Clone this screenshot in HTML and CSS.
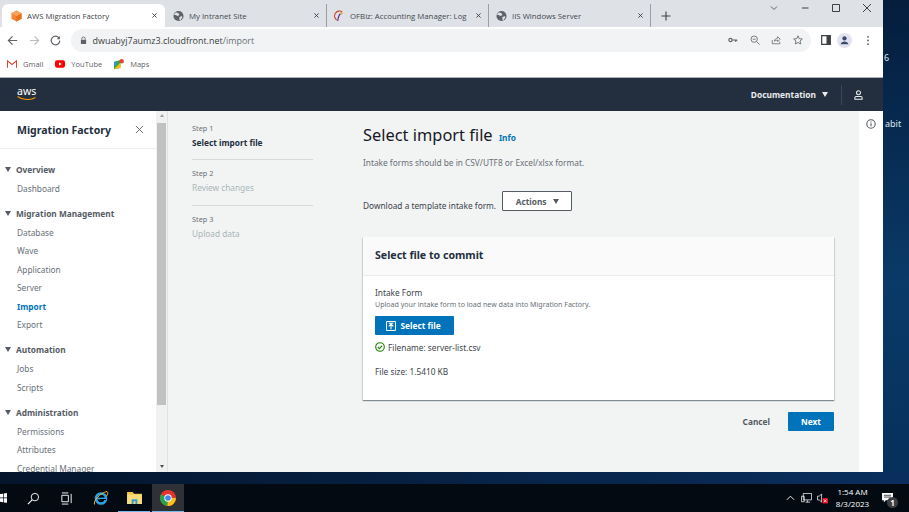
FILE: index.html
```html
<!DOCTYPE html>
<html lang="en">
<head>
  <meta charset="UTF-8">
  <title>AWS Migration Factory</title>
  <link rel="stylesheet" href="styles.css">
</head>
<body>
  <div class="desktop">
    <div class="browser">
      <!-- tab strip -->
      <div class="tabstrip">
        <div class="tab tab-active">
          <svg class="favicon" viewBox="0 0 12 12"><path d="M6 0l5.500 3v6L6 12 .5 9V3z" fill="#f58536"/><path d="M6 6l5.500-3v6L6 12z" fill="#e8701a"/><path d="M6 0l5.500 3L6 6 .5 3z" fill="#f9a45c"/></svg>
          <span class="tab-title">AWS Migration Factory</span>
          <svg class="tab-close" viewBox="0 0 6 6"><path d="M.5 .5l5 5M5.500 .5l-5 5" stroke="#3c4043" stroke-width="1.100"/></svg>
        </div>
        <div class="tab tab-2">
          <svg class="favicon" viewBox="0 0 12 12"><circle cx="6" cy="6" r="5.500" fill="#5f6368"/><path d="M3 2l3 1 1 2-2 1-2-1-2 0zM7 7l3-1 0 2-2 3-1-1z" fill="#dee1e6"/></svg>
          <span class="tab-title">My Intranet Site</span>
          <svg class="tab-close" viewBox="0 0 6 6"><path d="M.5 .5l5 5M5.500 .5l-5 5" stroke="#3c4043" stroke-width="1.100"/></svg>
        </div>
        <div class="tab tab-3">
          <svg class="favicon" viewBox="0 0 12 12"><path d="M9 1.500A5 5 0 0 0 3 10.500" fill="none" stroke="#c8452c" stroke-width="1.200"/><path d="M7 3.500C5 5 4.500 8 4 11.500" fill="none" stroke="#5b2a86" stroke-width="1.200"/><circle cx="8" cy="3" r="1.300" fill="#e8a33a"/></svg>
          <span class="tab-title">OFBiz: Accounting Manager: Log</span>
          <svg class="tab-close" viewBox="0 0 6 6"><path d="M.5 .5l5 5M5.500 .5l-5 5" stroke="#3c4043" stroke-width="1.100"/></svg>
        </div>
        <div class="tab tab-4">
          <svg class="favicon" viewBox="0 0 12 12"><circle cx="6" cy="6" r="5.500" fill="#5f6368"/><path d="M3 2l3 1 1 2-2 1-2-1-2 0zM7 7l3-1 0 2-2 3-1-1z" fill="#dee1e6"/></svg>
          <span class="tab-title">IIS Windows Server</span>
          <svg class="tab-close" viewBox="0 0 6 6"><path d="M.5 .5l5 5M5.500 .5l-5 5" stroke="#3c4043" stroke-width="1.100"/></svg>
        </div>
        <svg class="new-tab" viewBox="0 0 10 10"><path d="M5 .5v9M.5 5h9" stroke="#3c4043" stroke-width="1.100"/></svg>
        <div class="win-controls">
          <svg viewBox="0 0 10 10"><path d="M2 3.500l3 3 3-3" fill="none" stroke="#5f6368"/></svg>
          <svg viewBox="0 0 10 10"><path d="M2 5h6.500" stroke="#3c4043"/></svg>
          <svg viewBox="0 0 10 10"><path d="M1.500 1.500h7v7h-7z" fill="none" stroke="#3c4043"/></svg>
          <svg viewBox="0 0 10 10"><path d="M1 1l8 8M9 1l-8 8" stroke="#3c4043"/></svg>
        </div>
      </div>

      <!-- address bar -->
      <div class="toolbar">
        <svg class="nav-icon" viewBox="0 0 12 12"><path d="M11 6H2M6 1.500L1.500 6 6 10.500" fill="none" stroke="#5f6368" stroke-width="1.300"/></svg>
        <svg class="nav-icon nav-off" viewBox="0 0 12 12"><path d="M1 6h9M6 1.500L10.500 6 6 10.500" fill="none" stroke="#b9bcc0" stroke-width="1.300"/></svg>
        <svg class="nav-icon" viewBox="0 0 12 12"><path d="M10 3.500A4.700 4.700 0 1 0 10.700 6" fill="none" stroke="#5f6368" stroke-width="1.300"/><path d="M10.800 1v3.500H7.300z" fill="#5f6368"/></svg>
        <div class="omnibox">
          <svg class="lock" viewBox="0 0 8 10"><path d="M2 4V3a2 2 0 0 1 4 0v1" fill="none" stroke="#5f6368"/><rect x="1" y="4" width="6" height="5" rx=".5" fill="#5f6368"/></svg>
          <span class="url">dwuabyj7aumz3.cloudfront.net<span class="url-path">/import</span></span>
          <div class="omni-icons">
            <svg viewBox="0 0 12 12"><circle cx="3" cy="6" r="2" fill="none" stroke="#5f6368" stroke-width="1.400"/><path d="M5 6h6M9 6v2M10.500 6v1.500" stroke="#5f6368" stroke-width="1.300"/></svg>
            <svg viewBox="0 0 12 12"><circle cx="5" cy="5" r="3.800" fill="none" stroke="#5f6368"/><path d="M8 8l3.500 3.500M3.300 5h3.400" stroke="#5f6368"/></svg>
            <svg viewBox="0 0 12 12"><path d="M1.500 6v4.500h9V8M4 7.500C4.500 5 6 3.800 8 3.800V2l3 3-3 3V6C6.500 6 5 6.500 4 7.500z" fill="none" stroke="#5f6368" stroke-width=".9"/></svg>
            <svg viewBox="0 0 12 12"><path d="M6 1l1.500 3.400 3.700.4-2.800 2.400.8 3.600L6 9l-3.200 1.800.8-3.600L.8 4.800l3.700-.4z" fill="none" stroke="#5f6368"/></svg>
          </div>
        </div>
        <svg class="panel-icon" viewBox="0 0 10 10"><path d="M.7.700h8.600v8.600H.7z" fill="none" stroke="#3c4043" stroke-width="1.200"/><path d="M5.500 1h4v8h-4z" fill="#3c4043"/></svg>
        <div class="profile"><svg viewBox="0 0 14 14"><circle cx="7" cy="4.800" r="2.300" fill="#3c4a6b"/><path d="M2.800 11c.4-2 2.200-3 4.200-3s3.800 1 4.200 3z" fill="#3c4a6b"/></svg></div>
        <svg class="dots" viewBox="0 0 4 12"><circle cx="2" cy="2" r="1" fill="#5f6368"/><circle cx="2" cy="6" r="1" fill="#5f6368"/><circle cx="2" cy="10" r="1" fill="#5f6368"/></svg>
      </div>

      <!-- bookmarks -->
      <div class="bookmarks">
        <div class="bookmark bm-gmail">
          <svg viewBox="0 0 11 9"><path d="M.5 8.500V1L5.500 5 10.500 1v7.500" fill="none" stroke="#d9443a" stroke-width="1.200"/></svg>
          <span>Gmail</span>
        </div>
        <div class="bookmark bm-youtube">
          <svg viewBox="0 0 11 8"><rect width="11" height="8" rx="2" fill="#f00"/><path d="M4.300 2.200L7.500 4 4.300 5.800z" fill="#fff"/></svg>
          <span>YouTube</span>
        </div>
        <div class="bookmark">
          <svg viewBox="0 0 11 11"><path d="M0 3l7-2v9l-7 1z" fill="#34a853"/><path d="M0 11l7-7v6z" fill="#fbbc04"/><path d="M3 5L0 8V3z" fill="#4285f4"/><circle cx="8.500" cy="2.500" r="2.400" fill="#ea4335"/></svg>
          <span>Maps</span>
        </div>
      </div>

      <!-- app header -->
      <header class="app-header">
        <div class="aws-logo">
          <span class="aws-word">aws</span>
          <svg viewBox="0 0 20 5"><path d="M.5 .5C5 4 14 4.500 18.500 1.500" fill="none" stroke="#f90" stroke-width="1.100"/></svg>
        </div>
        <div class="doc-menu">Documentation <span class="caret caret-light"></span></div>
        <div class="user-menu">
          <svg viewBox="0 0 10 11"><circle cx="5" cy="3" r="2.200" fill="none" stroke="#e9ebed" stroke-width="1.200"/><path d="M1 10.200V8.500c0-.8.600-1.300 1.300-1.300h5.400c.7 0 1.300.5 1.300 1.300v1.700z" fill="none" stroke="#e9ebed" stroke-width="1.200"/></svg>
        </div>
      </header>

      <div class="app-body">
        <!-- side navigation -->
        <nav class="sidenav">
          <div class="sidenav-head">
            <span class="sidenav-title">Migration Factory</span>
            <svg class="sidenav-close" viewBox="0 0 10 10"><path d="M1 1l8 8M9 1l-8 8" stroke="#545b64" stroke-width="1"/></svg>
          </div>
          <div class="nav-groups">
            <div class="nav-group">
              <div class="nav-heading"><span class="caret"></span>Overview</div>
              <a class="nav-link">Dashboard</a>
            </div>
            <div class="nav-group">
              <div class="nav-heading"><span class="caret"></span>Migration Management</div>
              <a class="nav-link">Database</a>
              <a class="nav-link">Wave</a>
              <a class="nav-link">Application</a>
              <a class="nav-link">Server</a>
              <a class="nav-link nav-current">Import</a>
              <a class="nav-link">Export</a>
            </div>
            <div class="nav-group">
              <div class="nav-heading"><span class="caret"></span>Automation</div>
              <a class="nav-link">Jobs</a>
              <a class="nav-link">Scripts</a>
            </div>
            <div class="nav-group">
              <div class="nav-heading"><span class="caret"></span>Administration</div>
              <a class="nav-link">Permissions</a>
              <a class="nav-link">Attributes</a>
              <a class="nav-link nav-last">Credential Manager</a>
            </div>
          </div>
        </nav>
        <div class="scrollbar">
          <span class="scroll-up"></span>
          <span class="scroll-thumb"></span>
          <span class="scroll-down"></span>
        </div>

        <!-- wizard -->
        <main class="wizard">
          <ol class="steps">
            <li class="step">
              <small>Step 1</small>
              <span class="step-current">Select import file</span>
            </li>
            <li class="step">
              <small>Step 2</small>
              <span class="step-off">Review changes</span>
            </li>
            <li class="step">
              <small>Step 3</small>
              <span class="step-off">Upload data</span>
            </li>
          </ol>

          <section class="content">
            <h1>Select import file <a class="info">Info</a></h1>
            <p class="intro">Intake forms should be in CSV/UTF8 or Excel/xlsx format.</p>
            <div class="template-row">
              <span class="template-text">Download a template intake form.</span>
              <button class="btn-normal">Actions <span class="caret"></span></button>
            </div>

            <div class="card">
              <div class="card-head">Select file to commit</div>
              <div class="card-body">
                <div class="field-label">Intake Form</div>
                <div class="field-desc">Upload your intake form to load new data into Migration Factory.</div>
                <button class="btn-primary btn-file">
                  <svg viewBox="0 0 11 11"><path d="M.6.600h9.800v9.800H.6z" fill="none" stroke="#fff" stroke-width="1.100"/><path d="M5.500 9V4M3 5.800l2.500-2.500L8 5.800M3 2.500h5" fill="none" stroke="#fff" stroke-width="1.200"/></svg>
                  Select file
                </button>
                <div class="file-name">
                  <svg viewBox="0 0 10 10"><circle cx="5" cy="5" r="4.300" fill="none" stroke="#1d8102" stroke-width="1.100"/><path d="M2.800 5l1.600 1.600 2.800-3" fill="none" stroke="#1d8102" stroke-width="1.100"/></svg>
                  Filename: server-list.csv
                </div>
                <div class="file-size">File size: 1.5410 KB</div>
              </div>
            </div>

            <div class="actions">
              <a class="btn-link">Cancel</a>
              <button class="btn-primary btn-next">Next</button>
            </div>
          </section>
        </main>

        <aside class="tools">
          <svg viewBox="0 0 10 10"><circle cx="5" cy="5" r="4.200" fill="none" stroke="#545b64" stroke-width="1.100"/><path d="M5 4.300v3M5 2.400v1" stroke="#545b64" stroke-width="1.100"/></svg>
        </aside>
      </div>
    </div>

    <div class="wallpaper">
      <span class="wp-6">6</span>
      <span class="wp-abit">abit</span>
    </div>
  </div>

  <!-- windows taskbar -->
  <footer class="taskbar">
    <svg class="tb-start" viewBox="0 0 8 12"><path d="M0 1.500l3.500-.5v4.500H0zM4.300 .9L8 .4v5.100H4.300zM0 6.400h3.500v4.500L0 10.400zM4.300 6.400H8v5.100l-3.700-.5z" fill="#fff"/></svg>
    <svg class="tb-icon tb-search" viewBox="0 0 14 14"><circle cx="8.500" cy="5.500" r="4" fill="none" stroke="#fff"/><path d="M5.500 8.500L1 13" stroke="#fff" stroke-width="1.200"/></svg>
    <svg class="tb-icon tb-tasks" viewBox="0 0 14 14"><path d="M2 3.500h7v7H2zM12 2v10" fill="none" stroke="#fff"/><path d="M2 1h7M2 13h7" stroke="#fff"/></svg>
    <svg class="tb-icon tb-ie" viewBox="0 0 16 16"><circle cx="8" cy="8.500" r="5" fill="none" stroke="#2ba4e8" stroke-width="2.600"/><path d="M3.500 8.500h9" stroke="#2ba4e8" stroke-width="1.700"/><path d="M13 9.500h-6" stroke="#000" stroke-width="1"/><path d="M1.500 14.500C0 11 7 3 14 1.500c1.500 1 .5 3-.5 4.500" fill="none" stroke="#f4b828" stroke-width="1"/></svg>
    <div class="tb-app tb-explorer"><svg viewBox="0 0 16 14"><path d="M0 1h6l1.500 2H16v11H0z" fill="#f3c74f"/><path d="M0 4h16v10H0z" fill="#f9da7d"/><path d="M5 9h6v5H5z" fill="#2a9bd6"/><path d="M7 11h2v3H7z" fill="#f9da7d"/></svg></div>
    <div class="tb-app tb-chrome"><svg viewBox="0 0 16 16"><circle cx="8" cy="8" r="8" fill="#e3352d"/><path d="M8 8L1 4.200A8 8 0 0 0 7.400 16z" fill="#2aa24a"/><path d="M8 8h8A8 8 0 0 1 7.400 16z" fill="#fbc116"/><circle cx="8" cy="8" r="3.700" fill="#fff"/><circle cx="8" cy="8" r="2.800" fill="#4285f4"/></svg></div>
    <div class="tray">
      <svg class="tray-up" viewBox="0 0 10 6"><path d="M1 5l4-4 4 4" fill="none" stroke="#fff"/></svg>
      <svg class="tray-net" viewBox="0 0 12 12"><path d="M2.500 .5h9v7h-9zM.5 3.500h3v6h-3zM5 10h5M7 8v2" fill="#030a12" stroke="#fff" stroke-width=".8"/></svg>
      <svg class="tray-vol" viewBox="0 0 12 12"><path d="M.5 3.500h2L5 1v9L2.500 7.500h-2z" fill="none" stroke="#fff" stroke-width=".8"/><rect x="6" y="5.500" width="6" height="6" rx="1" fill="#e81123"/><path d="M7.500 7l3 3M10.500 7l-3 3" stroke="#fff" stroke-width=".8"/></svg>
      <div class="clock"><span>1:54 AM</span><span>8/3/2023</span></div>
      <div class="notify">
        <svg viewBox="0 0 12 11"><path d="M0 0h12v8H4L2 10.500V8H0z" fill="#fff"/><path d="M2 2.500h8M2 4.500h8" stroke="#030a12" stroke-width=".8"/></svg>
        <span class="notify-badge">1</span>
      </div>
    </div>
  </footer>
</body>
</html>
```

FILE: styles.css
```css
:root {
  --squid: #232f3e;
  --text: #16191f;
  --grey: #545b64;
  --light-grey: #aab7b8;
  --blue: #0073bb;
  --page-bg: #f2f3f3;
  --line: #d5dbdb;
}

* {
  box-sizing: border-box;
}

html, body {
  margin: 0;
  height: 512px;
  overflow: hidden;
}

body {
  display: flex;
  flex-direction: column;
  font-family: "Noto Sans", "Open Sans", Arial, sans-serif;
  font-size: 8.300px;
  color: var(--text);
  background: linear-gradient(90deg, #04152c, #0a2f5e);
}

svg {
  display: block;
  flex: none;
}

button {
  font-family: inherit;
  cursor: pointer;
}

.caret {
  display: inline-block;
  width: 0;
  height: 0;
  border-left: 3.500px solid transparent;
  border-right: 3.500px solid transparent;
  border-top: 5px solid var(--grey);
}

.caret-light {
  border-top-color: #e9ebed;
}

/* desktop and window */
.desktop {
  display: flex;
  height: 472px;
  flex: none;
}

.browser {
  width: 883px;
  display: flex;
  flex-direction: column;
  background: #fff;
}

.wallpaper {
  position: relative;
  flex: 1;
  color: #dfe7ef;
  font-size: 9px;
  background: linear-gradient(180deg, #041d3d, #0a3a68 60%, #06305c);
}

.wp-6 {
  position: absolute;
  left: 1px;
  top: 51px;
}

.wp-abit {
  position: absolute;
  left: 2px;
  top: 117px;
}

/* tabs */
.tabstrip {
  height: 27px;
  flex: none;
  display: flex;
  align-items: flex-end;
  padding-left: 2px;
  background: #dee1e6;
  font-family: "Open Sans", Arial, sans-serif;
  font-size: 7.800px;
  color: #45494e;
}

.tab {
  height: 23px;
  display: flex;
  align-items: center;
  gap: 5px;
  border-right: 1px solid #9aa0a6;
  background-clip: padding-box;
}

.tab-active {
  width: 163px;
  padding-left: 9px;
  padding-right: 8px;
  border-right: 0;
  border-radius: 6px 6px 0 0;
  background: #fff;
  color: #3c4043;
}

.tab-2 {
  width: 162px;
  padding-left: 8px;
  padding-right: 7px;
}

.tab-3 {
  width: 162px;
  padding-left: 7px;
  padding-right: 7px;
}

.tab-4 {
  width: 162px;
  padding-left: 7px;
  padding-right: 7px;
}

.favicon {
  width: 11px;
  height: 12px;
}

.tab-title {
  flex: 1;
  white-space: nowrap;
}

.tab-close {
  width: 5px;
  height: 5px;
}

.new-tab {
  width: 10px;
  height: 10px;
  margin-left: 10px;
  margin-bottom: 6px;
}

.win-controls {
  position: absolute;
  top: 3px;
  left: 769px;
  display: flex;
  gap: 21px;
}

.win-controls svg {
  width: 10px;
  height: 10px;
}

/* address bar */
.toolbar {
  height: 26px;
  flex: none;
  display: flex;
  align-items: center;
  padding-left: 7px;
  background: #fff;
}

.nav-icon {
  width: 11px;
  height: 11px;
  margin-right: 10.500px;
}

.omnibox {
  width: 740px;
  height: 23px;
  margin-left: -1px;
  display: flex;
  align-items: center;
  padding-left: 9px;
  border-radius: 12px;
  background: #f1f3f4;
  font-family: "Open Sans", Arial, sans-serif;
  font-size: 8.950px;
}

.lock {
  width: 7px;
  height: 9px;
  margin-right: 6px;
}

.url {
  color: #3c4043;
}

.url-path {
  color: #6b7075;
}

.omni-icons {
  margin-left: auto;
  display: flex;
  gap: 11.500px;
  padding-right: 8px;
}

.omni-icons svg {
  width: 10px;
  height: 10px;
}

.panel-icon {
  width: 10px;
  height: 10px;
  margin-left: 10px;
}

.profile {
  width: 15px;
  height: 15px;
  margin-left: 6px;
  display: flex;
  align-items: center;
  justify-content: center;
  border-radius: 50%;
  background: #e3e3f0;
}

.profile svg {
  width: 13px;
  height: 13px;
}

.dots {
  width: 4px;
  height: 11px;
  margin-left: 14px;
}

/* bookmarks */
.bookmarks {
  height: 24px;
  flex: none;
  display: flex;
  align-items: center;
  gap: 12px;
  padding: 0 0 3px 7px;
  font-family: "Open Sans", Arial, sans-serif;
  font-size: 7.500px;
  color: #5f6368;
}

.bookmark {
  display: flex;
  align-items: center;
  gap: 6px;
}

.bookmark svg {
  width: 10px;
  height: 10px;
}

/* app header */
.app-header {
  height: 34px;
  flex: none;
  display: flex;
  align-items: center;
  padding-left: 17px;
  background: var(--squid);
  border-top: 1px solid #aab0b6;
  color: #e9ebed;
}

.aws-logo {
  width: 21px;
  margin-top: -1px;
}

.aws-word {
  display: block;
  height: 9px;
  line-height: 8px;
  font-size: 10.500px;
  color: #fff;
}

.aws-logo svg {
  width: 20px;
  height: 5px;
}

.doc-menu {
  margin-left: auto;
  margin-top: -1px;
  display: flex;
  align-items: center;
  gap: 6px;
  font-weight: 700;
  font-size: 8.400px;
}

.user-menu {
  margin-left: 13px;
  height: 20px;
  padding: 0 20px 0 12px;
  display: flex;
  align-items: center;
  border-left: 1px solid #3a4757;
}

.user-menu svg {
  width: 9px;
  height: 10px;
}

/* layout under the header */
.app-body {
  flex: 1;
  min-height: 0;
  display: flex;
  background: var(--page-bg);
}

/* side navigation */
.sidenav {
  width: 156px;
  flex: none;
  overflow: hidden;
  background: #fff;
}

.sidenav-head {
  height: 38px;
  display: flex;
  align-items: center;
  justify-content: space-between;
  padding: 0 12px 0 17px;
  border-bottom: 1px solid #eaeded;
}

.sidenav-title {
  font-size: 10.550px;
  font-weight: 700;
  color: #232f3e;
}

.sidenav-close {
  width: 9px;
  height: 9px;
}

.nav-groups {
  padding-top: 10px;
  display: flex;
  flex-direction: column;
  gap: 5px;
}

.nav-heading {
  height: 20.500px;
  display: flex;
  align-items: center;
  gap: 5px;
  padding-left: 5px;
  font-weight: 700;
  color: var(--grey);
}

.nav-link {
  display: block;
  height: 18.500px;
  line-height: 18.500px;
  padding-left: 17px;
  color: #687078;
  white-space: nowrap;
}

.nav-current {
  color: var(--blue);
  font-weight: 700;
}

.scrollbar {
  width: 12px;
  flex: none;
  display: flex;
  flex-direction: column;
  align-items: center;
  border-right: 1px solid #dfe2e2;
  background: #f1f1f1;
}

.scroll-up {
  margin-top: 3px;
  border-left: 2.500px solid transparent;
  border-right: 2.500px solid transparent;
  border-bottom: 3px solid #a3a3a3;
}

.scroll-thumb {
  width: 9px;
  height: 282px;
  margin-top: 6px;
  margin-right: 1px;
  background: #c1c1c1;
}

.scroll-down {
  margin-top: auto;
  margin-bottom: 4px;
  border-left: 2.500px solid transparent;
  border-right: 2.500px solid transparent;
  border-top: 3px solid #505050;
}

/* wizard */
.wizard {
  flex: 1;
  min-width: 0;
  display: flex;
  padding: 10px 25px 0 24px;
  gap: 50px;
}

.steps {
  width: 121px;
  flex: none;
  margin: 0;
  padding: 0;
  list-style: none;
}

.step {
  height: 46px;
  padding-top: 1px;
  border-bottom: 1px solid var(--line);
  line-height: 13px;
}

.step:first-child {
  height: 39px;
}

.step + .step {
  padding-top: 7px;
}

.step:last-child {
  border-bottom: 0;
}

.step small {
  display: block;
  margin-bottom: 1px;
  font-size: 7.300px;
  color: #687078;
}

.step-current {
  font-weight: 700;
  color: var(--squid);
}

.step-off {
  color: var(--light-grey);
}

.content {
  width: 471px;
  flex: none;
  padding-top: 1px;
}

h1 {
  margin: 0;
  height: 27px;
  font-size: 16.400px;
  line-height: 25px;
  font-weight: 400;
  color: #16191f;
}

.info {
  margin-left: 2px;
  font-size: 8.300px;
  font-weight: 700;
  color: var(--blue);
}

.intro {
  margin: 7px 0 0;
  line-height: 13px;
  color: #687078;
}

.template-row {
  margin-top: 22px;
  display: flex;
  align-items: center;
  gap: 6px;
  height: 20px;
}

.template-text {
  margin-top: 9px;
  color: #3b444c;
}

.btn-normal {
  width: 70px;
  height: 20px;
  padding: 0;
  display: flex;
  align-items: center;
  justify-content: center;
  gap: 6px;
  border: 1px solid var(--grey);
  border-radius: 1px;
  background: #fff;
  font-size: 8.300px;
  font-weight: 700;
  color: var(--grey);
}

.card {
  margin-top: 26px;
  background: #fff;
  box-shadow: 0 1px 1px 0 rgba(0, 28, 36, 0.35), 1px 1px 1px 0 rgba(0, 28, 36, 0.1), -1px 1px 1px 0 rgba(0, 28, 36, 0.1);
}

.card-head {
  height: 39px;
  padding: 0 12px 2px;
  display: flex;
  align-items: center;
  border-bottom: 1px solid #eaeded;
  background: #fafafa;
  font-size: 10.600px;
  font-weight: 700;
  color: var(--squid);
}

.card-body {
  height: 124px;
  padding: 11px 12px 0;
}

.field-label {
  height: 11px;
  line-height: 11px;
  color: #3b444c;
}

.field-desc {
  height: 12px;
  line-height: 12px;
  font-size: 7.070px;
  color: #687078;
}

.btn-primary {
  border: 0;
  border-radius: 1px;
  background: var(--blue);
  color: #fff;
  font-size: 8.300px;
  font-weight: 700;
  padding: 0;
}

.btn-file {
  margin-top: 6px;
  width: 79px;
  height: 19px;
  padding-left: 11px;
  display: flex;
  align-items: center;
  gap: 4.500px;
}

.btn-file svg {
  width: 10px;
  height: 10px;
}

.file-name {
  margin-top: 6px;
  display: flex;
  align-items: center;
  gap: 3px;
  height: 12px;
  color: #3b444c;
}

.file-name svg {
  width: 10px;
  height: 10px;
}

.file-size {
  margin-top: 13px;
  line-height: 12px;
  color: #3b444c;
}

.actions {
  margin-top: 12px;
  display: flex;
  align-items: center;
  justify-content: flex-end;
  gap: 18px;
}

.btn-link {
  font-weight: 700;
  color: var(--grey);
}

.btn-next {
  width: 46px;
  height: 19px;
}

.tools {
  width: 24px;
  flex: none;
  padding: 8px 0 0 7px;
  background: #fff;
}

.tools svg {
  width: 10px;
  height: 10px;
}

/* taskbar */
.taskbar {
  flex: none;
  margin-top: 12px;
  height: 28px;
  display: flex;
  align-items: center;
  background: #030a12;
  color: #fff;
}

.tb-start {
  width: 7px;
  height: 12px;
}

.tb-icon {
  width: 13px;
  height: 13px;
}

.tb-search {
  margin-left: 20px;
}

.tb-tasks {
  margin-left: 20px;
}

.tb-ie {
  width: 16px;
  height: 16px;
  margin-left: 20px;
}

.tb-app {
  width: 32px;
  height: 28px;
  display: flex;
  align-items: center;
  justify-content: center;
  border-bottom: 1px solid #76b9ed;
}

.tb-explorer {
  margin-left: 9px;
}

.tb-explorer svg {
  width: 15px;
  height: 13px;
}

.tb-chrome {
  margin-left: 2px;
  background: #2e3236;
}

.tb-chrome svg {
  width: 16px;
  height: 16px;
}

.tray {
  margin-left: auto;
  display: flex;
  align-items: center;
  padding-right: 16px;
}

.tray-up {
  width: 9px;
  height: 6px;
}

.tray-net {
  width: 11px;
  height: 11px;
  margin-left: 6px;
}

.tray-vol {
  width: 11px;
  height: 11px;
  margin-left: 5px;
}

.clock {
  margin-left: 9px;
  width: 31px;
  display: flex;
  flex-direction: column;
  align-items: center;
  line-height: 12px;
  font-family: "Open Sans", Arial, sans-serif;
  font-size: 8px;
  white-space: nowrap;
}

.notify {
  position: relative;
  margin-left: 14px;
}

.notify svg {
  width: 11px;
  height: 10px;
}

.notify-badge {
  position: absolute;
  left: 5px;
  top: 4px;
  width: 11px;
  height: 11px;
  border-radius: 50%;
  background: #3c3f42;
  font-size: 8px;
  font-weight: 700;
  line-height: 11px;
  text-align: center;
}
```
